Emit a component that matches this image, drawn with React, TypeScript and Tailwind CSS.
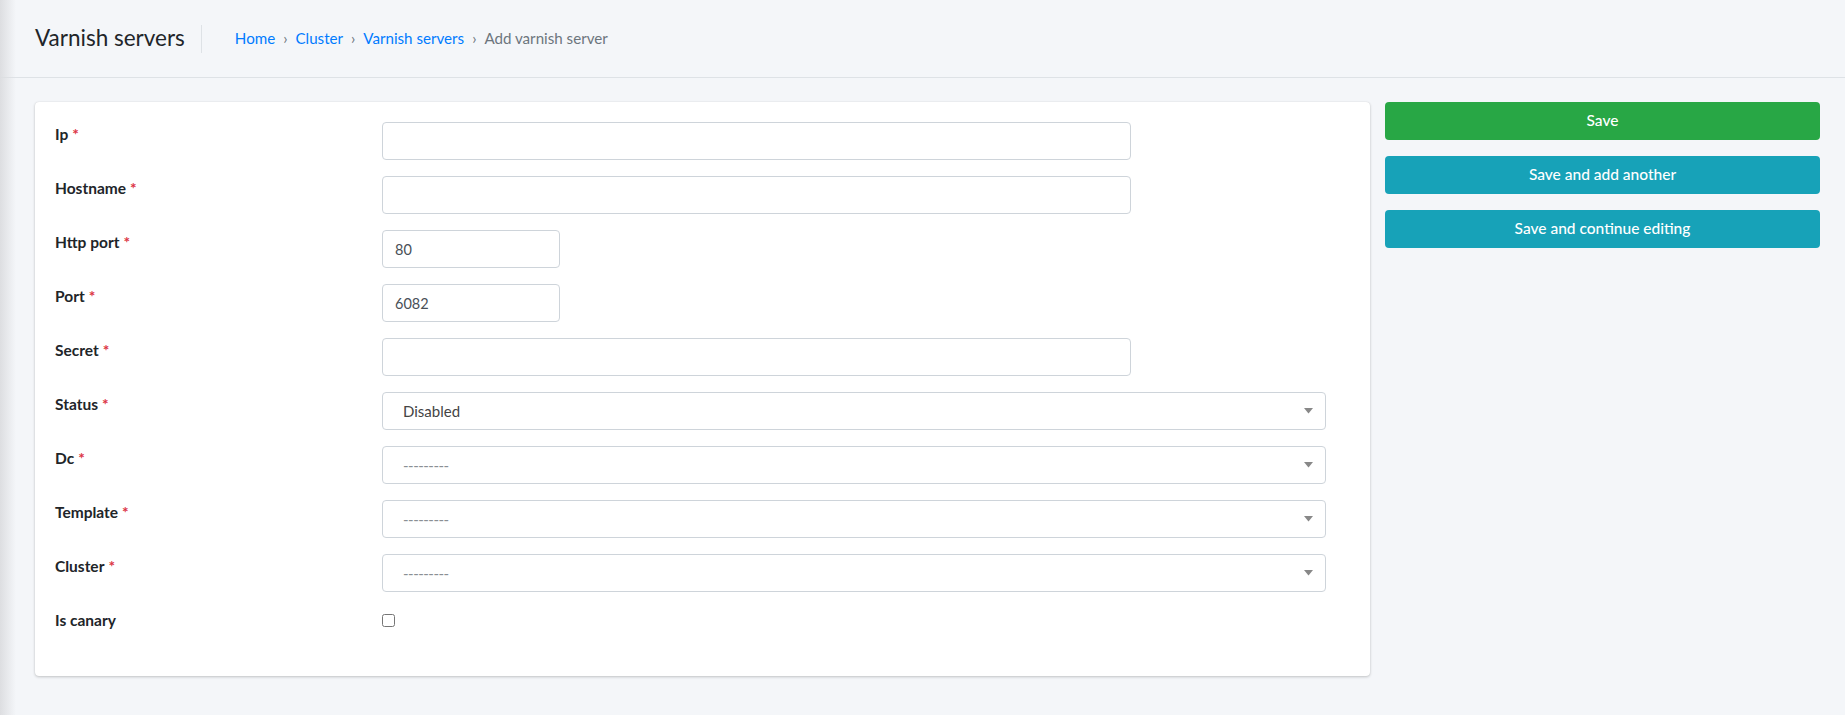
import React from "react";

const Req = () => <span className="text-[#dc3545] ml-[4px]">*</span>;

function Label({ text, req = true }: { text: string; req?: boolean }) {
  return (
    <div className="w-[327px] shrink-0 leading-[24px] text-[15.5px] font-bold text-[#212529]">
      {text}
      {req && <Req />}
    </div>
  );
}

function TextInput({ w, value = "" }: { w: string; value?: string }) {
  return (
    <input
      type="text"
      defaultValue={value}
      className={`${w} h-[38px] border border-[#ced4da] rounded-[4px] bg-white px-[12px] text-[14.5px] text-[#495057] outline-none`}
    />
  );
}

function Select({ value, placeholder = false }: { value: string; placeholder?: boolean }) {
  return (
    <div className="w-[944px] h-[38px] border border-[#ced4da] rounded-[4px] bg-white flex items-center pl-[20px] pr-[10px]">
      <span className={`flex-1 text-[15px] ${placeholder ? "text-[#8a8f94] tracking-[-0.5px]" : "text-[#444]"}`}>{value}</span>
      <svg width="9" height="6" viewBox="0 0 9 6" className="mr-[2px]">
        <path d="M0 0 L9 0 L4.5 5.5 Z" fill="#888" />
      </svg>
    </div>
  );
}

function Row({ children, last = false }: { children: React.ReactNode; last?: boolean }) {
  return <div className={`flex items-start ${last ? "" : "mb-[16px]"}`}>{children}</div>;
}

export default function App() {
  return (
    <div className="relative w-full h-[715px] bg-[#f4f6f9] font-['Lato',sans-serif] overflow-hidden">
      <div className="absolute left-0 top-0 bottom-0 w-[16px] bg-gradient-to-r from-[#dddee1] to-transparent pointer-events-none" />
      <header className="h-[78px] border-b border-[#dee2e6] flex items-center pl-[35px]">
        <h1 className="text-[22.5px] text-[#212529] leading-none">Varnish servers</h1>
        <div className="w-px h-[28px] bg-[#dee2e6] ml-[16px] mr-[33px]" />
        <nav className="flex items-center text-[15.15px] leading-none">
          <span className="text-[#007bff]">Home</span>
          <span className="text-[#6c757d] px-[8px]">›</span>
          <span className="text-[#007bff]">Cluster</span>
          <span className="text-[#6c757d] px-[8px]">›</span>
          <span className="text-[#007bff]">Varnish servers</span>
          <span className="text-[#6c757d] px-[8px]">›</span>
          <span className="text-[#6c757d]">Add varnish server</span>
        </nav>
      </header>
      <main className="flex items-start pt-[24px] pl-[35px]">
        <div className="w-[1335px] bg-white rounded-[4px] shadow-[0_0_1px_rgba(0,0,0,0.125),0_1px_3px_rgba(0,0,0,0.2)] pt-[20px] pb-[44px] px-[20px]">
          <Row>
            <Label text="Ip" />
            <TextInput w="w-[749px]" />
          </Row>
          <Row>
            <Label text="Hostname" />
            <TextInput w="w-[749px]" />
          </Row>
          <Row>
            <Label text="Http port" />
            <TextInput w="w-[178px]" value="80" />
          </Row>
          <Row>
            <Label text="Port" />
            <TextInput w="w-[178px]" value="6082" />
          </Row>
          <Row>
            <Label text="Secret" />
            <TextInput w="w-[749px]" />
          </Row>
          <Row>
            <Label text="Status" />
            <Select value="Disabled" />
          </Row>
          <Row>
            <Label text="Dc" />
            <Select value="---------" placeholder />
          </Row>
          <Row>
            <Label text="Template" />
            <Select value="---------" placeholder />
          </Row>
          <Row>
            <Label text="Cluster" />
            <Select value="---------" placeholder />
          </Row>
          <Row last>
            <Label text="Is canary" req={false} />
            <div className="h-[24px] flex items-center">
              <input type="checkbox" className="w-[13px] h-[13px] m-0" />
            </div>
          </Row>
        </div>
        <div className="ml-[15px] w-[435px] flex flex-col gap-[16px]">
          <button className="h-[38px] rounded-[4px] bg-[#28a745] text-white text-[15.5px] font-[500]">Save</button>
          <button className="h-[38px] rounded-[4px] bg-[#17a2b8] text-white text-[15.5px] font-[500]">Save and add another</button>
          <button className="h-[38px] rounded-[4px] bg-[#17a2b8] text-white text-[15.5px] font-[500]">Save and continue editing</button>
        </div>
      </main>
    </div>
  );
}
